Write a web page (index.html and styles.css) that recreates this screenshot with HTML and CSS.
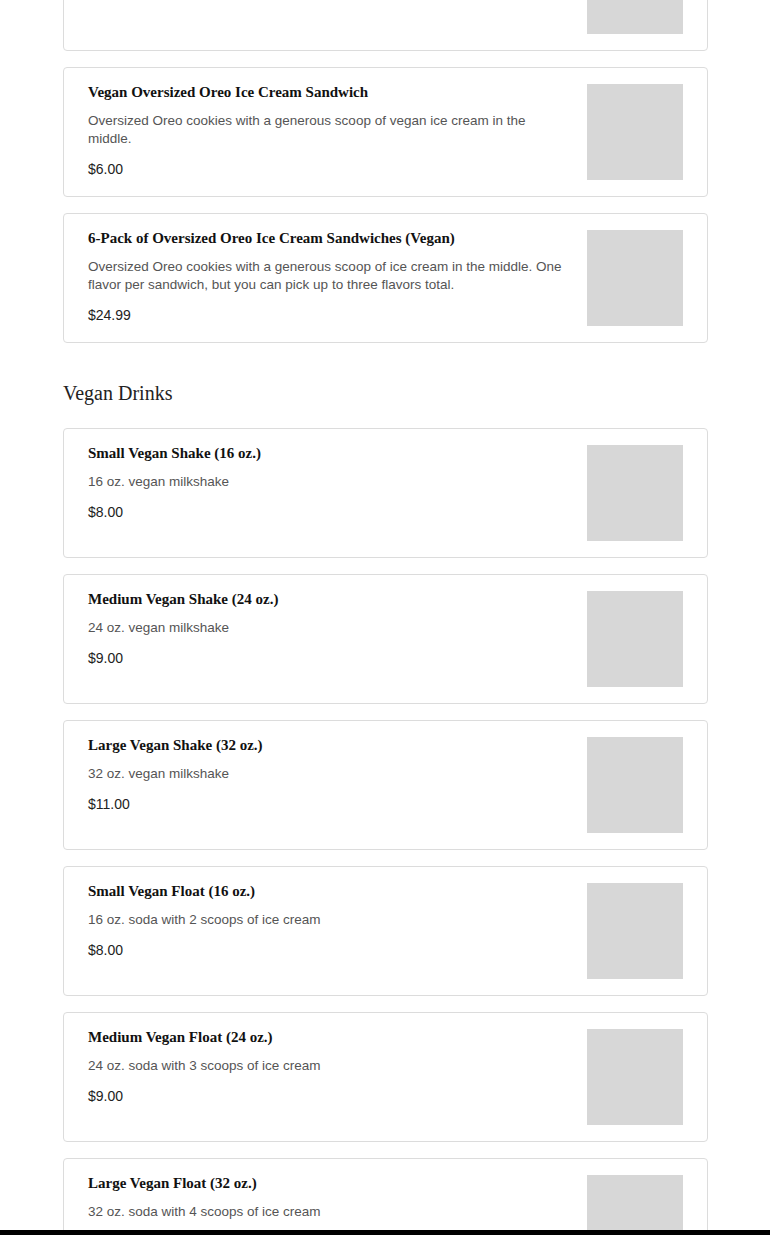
FILE: index.html
```html
<!DOCTYPE html>
<html lang="en">
<head>
<meta charset="utf-8">
<title>Menu</title>
<link rel="stylesheet" href="styles.css">
</head>
<body>
<main class="menu">
  <section class="group">
    <div class="card">
      <div class="info"></div>
      <div class="thumb"></div>
    </div>
    <div class="card">
      <div class="info">
        <h3 class="title">Vegan Oversized Oreo Ice Cream Sandwich</h3>
        <p class="desc">Oversized Oreo cookies with a generous scoop of vegan ice cream in the middle.</p>
        <p class="price">$6.00</p>
      </div>
      <div class="thumb"></div>
    </div>
    <div class="card">
      <div class="info">
        <h3 class="title">6-Pack of Oversized Oreo Ice Cream Sandwiches (Vegan)</h3>
        <p class="desc">Oversized Oreo cookies with a generous scoop of ice cream in the middle. One flavor per sandwich, but you can pick up to three flavors total.</p>
        <p class="price">$24.99</p>
      </div>
      <div class="thumb"></div>
    </div>
  </section>

  <h2 class="heading">Vegan Drinks</h2>

  <section class="group">
    <div class="card">
      <div class="info">
        <h3 class="title">Small Vegan Shake (16 oz.)</h3>
        <p class="desc">16 oz. vegan milkshake</p>
        <p class="price">$8.00</p>
      </div>
      <div class="thumb"></div>
    </div>
    <div class="card">
      <div class="info">
        <h3 class="title">Medium Vegan Shake (24 oz.)</h3>
        <p class="desc">24 oz. vegan milkshake</p>
        <p class="price">$9.00</p>
      </div>
      <div class="thumb"></div>
    </div>
    <div class="card">
      <div class="info">
        <h3 class="title">Large Vegan Shake (32 oz.)</h3>
        <p class="desc">32 oz. vegan milkshake</p>
        <p class="price">$11.00</p>
      </div>
      <div class="thumb"></div>
    </div>
    <div class="card">
      <div class="info">
        <h3 class="title">Small Vegan Float (16 oz.)</h3>
        <p class="desc">16 oz. soda with 2 scoops of ice cream</p>
        <p class="price">$8.00</p>
      </div>
      <div class="thumb"></div>
    </div>
    <div class="card">
      <div class="info">
        <h3 class="title">Medium Vegan Float (24 oz.)</h3>
        <p class="desc">24 oz. soda with 3 scoops of ice cream</p>
        <p class="price">$9.00</p>
      </div>
      <div class="thumb"></div>
    </div>
    <div class="card">
      <div class="info">
        <h3 class="title">Large Vegan Float (32 oz.)</h3>
        <p class="desc">32 oz. soda with 4 scoops of ice cream</p>
      </div>
      <div class="thumb"></div>
    </div>
  </section>
</main>
<div class="bottom-bar"></div>
</body>
</html>
```

FILE: styles.css
```css
html, body {
  margin: 0;
  padding: 0;
  background: #ffffff;
}

body {
  font-family: "Liberation Sans", Arial, sans-serif;
  color: #222;
}

.menu {
  width: 645px;
  margin: -79px 0 0 63px;
  padding-bottom: 40px;
}

.group {
  display: flex;
  flex-direction: column;
  gap: 16px;
}

.card {
  display: flex;
  gap: 16px;
  border: 1px solid #dcdcdc;
  border-radius: 4px;
  padding: 16px 24px;
  background: #fff;
}

.info {
  flex: 1;
  min-width: 0;
}

.title {
  margin: 0;
  font-family: "Liberation Serif", "Times New Roman", serif;
  font-weight: bold;
  font-size: 15px;
  line-height: 16px;
  color: #111;
}

.desc {
  margin: 12px 0 0;
  font-size: 13.5px;
  line-height: 18px;
  color: #555;
}

.price {
  margin: 12px 0 0;
  font-size: 14px;
  line-height: 18px;
  color: #222;
}

.thumb {
  flex: 0 0 96px;
  width: 96px;
  height: 96px;
  background: #d7d7d7;
}

.heading {
  margin: 36px 0 21px;
  font-family: "Liberation Serif", "Times New Roman", serif;
  font-weight: normal;
  font-size: 20px;
  line-height: 28px;
  color: #222;
}

.bottom-bar {
  position: fixed;
  left: 0;
  right: 0;
  bottom: 0;
  height: 5px;
  background: #000;
}
```
